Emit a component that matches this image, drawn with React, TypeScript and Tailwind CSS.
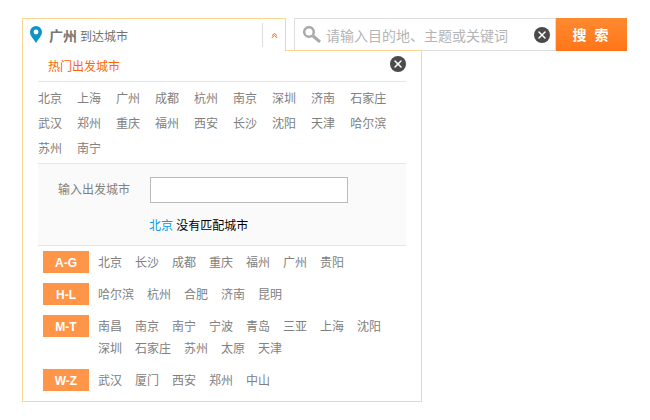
import { X } from "lucide-react";

const hotCities = ["北京", "上海", "广州", "成都", "杭州", "南京", "深圳", "济南", "石家庄", "武汉", "郑州", "重庆", "福州", "西安", "长沙", "沈阳", "天津", "哈尔滨", "苏州", "南宁"];

const letterGroups = [
  { label: "A-G", cities: ["北京", "长沙", "成都", "重庆", "福州", "广州", "贵阳"] },
  { label: "H-L", cities: ["哈尔滨", "杭州", "合肥", "济南", "昆明"] },
  { label: "M-T", cities: ["南昌", "南京", "南宁", "宁波", "青岛", "三亚", "上海", "沈阳", "深圳", "石家庄", "苏州", "太原", "天津"] },
  { label: "W-Z", cities: ["武汉", "厦门", "西安", "郑州", "中山"] },
];

function CloseDot() {
  return (
    <span className="flex h-4 w-4 items-center justify-center rounded-full bg-[#4a4a4a]">
      <X className="h-3 w-3 text-white" strokeWidth={3} />
    </span>
  );
}

export default function App() {
  return (
    <div className="h-[420px] w-[650px] bg-white pl-[22px] pt-[18px] font-['Liberation_Sans','Noto_Sans_CJK_SC',sans-serif] text-xs text-[#808080]">
      <div className="flex h-[33px]">
        <div className="relative z-20 flex h-[33px] w-[264px] items-center border border-b-0 border-[#fbd794] bg-white">
          <svg className="mb-[1px] ml-[7px]" width="12" height="17" viewBox="0 0 12 17">
            <path d="M6 0a6 6 0 0 0-6 6c0 4 4 7.500 6 11 2-3.500 6-7 6-11a6 6 0 0 0-6-6z" fill="#0f94c8" />
            <circle cx="6" cy="6" r="2.400" fill="#fff" />
          </svg>
          <span className="ml-[7px] pt-[2px] text-sm font-bold text-[#777]">广州</span>
          <span className="ml-[3px] pt-[3px] text-[#707070]">到达城市</span>
          <div className="ml-auto flex h-[24px] w-[23px] justify-center border-l border-[#ddd] pt-[10px]">
            <svg width="7" height="5" viewBox="0 0 7 5" fill="none" stroke="#f60" strokeWidth="1">
              <path d="M1 2.500L3.500 0.500L6 2.500" />
              <path d="M0.500 5L3.500 2.500L6.500 5" />
            </svg>
          </div>
        </div>
        <div className="ml-[8px] flex h-[33px] w-[262px] items-center border border-[#ddd] bg-white">
          <svg className="ml-[8px]" width="18" height="17" viewBox="0 0 18 17" fill="none" stroke="#aaa">
            <circle cx="6" cy="6" r="4.800" strokeWidth="2.500" />
            <path d="M10 10L17 16" strokeWidth="3" />
          </svg>
          <span className="ml-[5px] pt-[2px] text-sm text-[#b5b5b5]">请输入目的地、主题或关键词</span>
          <span className="ml-auto mr-[5px]">
            <CloseDot />
          </span>
        </div>
        <button className="flex h-[33px] w-[71px] items-center justify-center bg-gradient-to-b from-[#ff8a2e] to-[#ff7518] text-sm font-bold tracking-[2px] text-white">
          搜 索
        </button>
      </div>

      <div className="relative z-10 -mt-px h-[352px] w-[400px] border border-[#fbd794] bg-white">
        <div className="mx-[15px] flex h-[31px] items-center justify-between border-b border-[#e5e5e5] pl-[10px] text-[#f60]">
          <span className="pt-[2px]">热门出发城市</span>
          <span className="mb-[4px]">
            <CloseDot />
          </span>
        </div>
        <div className="mx-[15px] flex h-[82px] flex-wrap content-start border-b border-[#e5e5e5] pt-[5px] leading-[25px]">
          {hotCities.map((city) => (
            <span key={city} className="mr-[15px] h-[25px]">
              {city}
            </span>
          ))}
        </div>
        <div className="mx-[15px] h-[82px] border-b border-[#e5e5e5] bg-[#fafafa]">
          <div className="flex items-center pt-[13px]">
            <span className="ml-[20px] w-[92px]">输入出发城市</span>
            <input className="h-[26px] w-[198px] border border-[#bbb] bg-white" />
          </div>
          <div className="ml-[111px] mt-[15px] text-black">
            <span className="text-[#0a9be8]">北京</span> 没有匹配城市
          </div>
        </div>
        <div className="mx-[20px] pt-[5px]">
          {letterGroups.map((group) => (
            <div key={group.label} className="mb-[9px] flex">
              <span className="flex h-[22px] w-[46px] shrink-0 items-center justify-center bg-[#ff9549] pt-px font-bold text-white">
                {group.label}
              </span>
              <div className="ml-[9px] flex flex-wrap pt-px leading-[22px]">
                {group.cities.map((city) => (
                  <span key={city} className="mr-[13px]">
                    {city}
                  </span>
                ))}
              </div>
            </div>
          ))}
        </div>
      </div>
    </div>
  );
}
